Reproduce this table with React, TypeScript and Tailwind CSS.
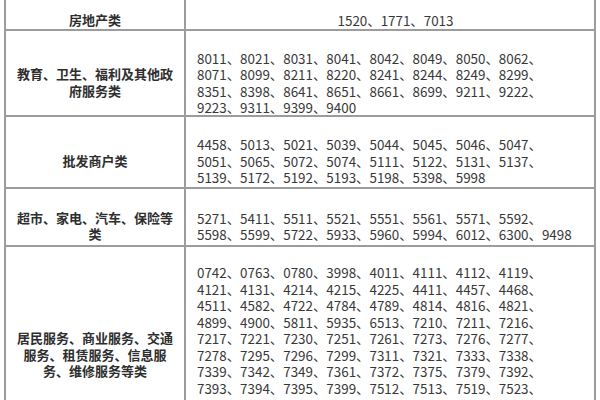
import React from "react";

const font = { fontFamily: '"Noto Sans CJK SC", "Noto Sans", sans-serif' };

type Row = {
  label: string[];
  codes: string[];
  h: string;
  pt: string;
  center?: boolean;
};

const rows: Row[] = [
  { label: ["房地产类"], codes: ["1520、1771、7013"], h: "h-[31px]", pt: "pt-[12px]", center: true },
  {
    label: ["教育、卫生、福利及其他政", "府服务类"],
    codes: [
      "8011、8021、8031、8041、8042、8049、8050、8062、",
      "8071、8099、8211、8220、8241、8244、8249、8299、",
      "8351、8398、8641、8651、8661、8699、9211、9222、",
      "9223、9311、9399、9400",
    ],
    h: "h-[86px]",
    pt: "pt-[19px]",
  },
  {
    label: ["批发商户类"],
    codes: [
      "4458、5013、5021、5039、5044、5045、5046、5047、",
      "5051、5065、5072、5074、5111、5122、5131、5137、",
      "5139、5172、5192、5193、5198、5398、5998",
    ],
    h: "h-[72px]",
    pt: "pt-[18px]",
  },
  {
    label: ["超市、家电、汽车、保险等", "类"],
    codes: [
      "5271、5411、5511、5521、5551、5561、5571、5592、",
      "5598、5599、5722、5933、5960、5994、6012、6300、9498",
    ],
    h: "h-[58px]",
    pt: "pt-[18px]",
  },
  {
    label: ["居民服务、商业服务、交通", "服务、租赁服务、信息服", "务、维修服务等类"],
    codes: [
      "0742、0763、0780、3998、4011、4111、4112、4119、",
      "4121、4131、4214、4215、4225、4411、4457、4468、",
      "4511、4582、4722、4784、4789、4814、4816、4821、",
      "4899、4900、5811、5935、6513、7210、7211、7216、",
      "7217、7221、7230、7251、7261、7273、7276、7277、",
      "7278、7295、7296、7299、7311、7321、7333、7338、",
      "7339、7342、7349、7361、7372、7375、7379、7392、",
      "7393、7394、7395、7399、7512、7513、7519、7523、",
      "7531、7534、7535、7539、7542、7549、7622、7623、",
      "7629、7631、7641、7692、7699、7829、7841、7911、",
      "7922、7929、7932、7933、7941、7991、7992、7997",
    ],
    h: "h-[201px]",
    pt: "pt-[17px]",
  },
];

export default function App() {
  return (
    <div className="w-[600px] h-[400px] overflow-hidden bg-white px-1" style={font}>
      <div className="border-l-2 border-r-2 border-[#9c9c9c]">
        {rows.map((r, i) => (
          <div key={i} className={`flex ${r.h} border-b-2 border-[#9c9c9c]`}>
            <div
              className={`w-[180px] shrink-0 border-r-2 border-[#9c9c9c] ${r.pt} flex flex-col items-center justify-center text-[13px] leading-[16.5px] font-bold text-[#2e2e2e]`}
            >
              {r.label.map((l, j) => (
                <div key={j} className="whitespace-nowrap">{l}</div>
              ))}
            </div>
            <div
              className={`flex-1 ${r.pt} pl-[11px] flex flex-col justify-center text-[13.4px] leading-[16.5px] text-[#383838] ${r.center ? "items-center pl-0" : ""}`}
            >
              {r.codes.map((c, j) => (
                <div key={j} className="whitespace-nowrap">{c}</div>
              ))}
            </div>
          </div>
        ))}
      </div>
    </div>
  );
}
